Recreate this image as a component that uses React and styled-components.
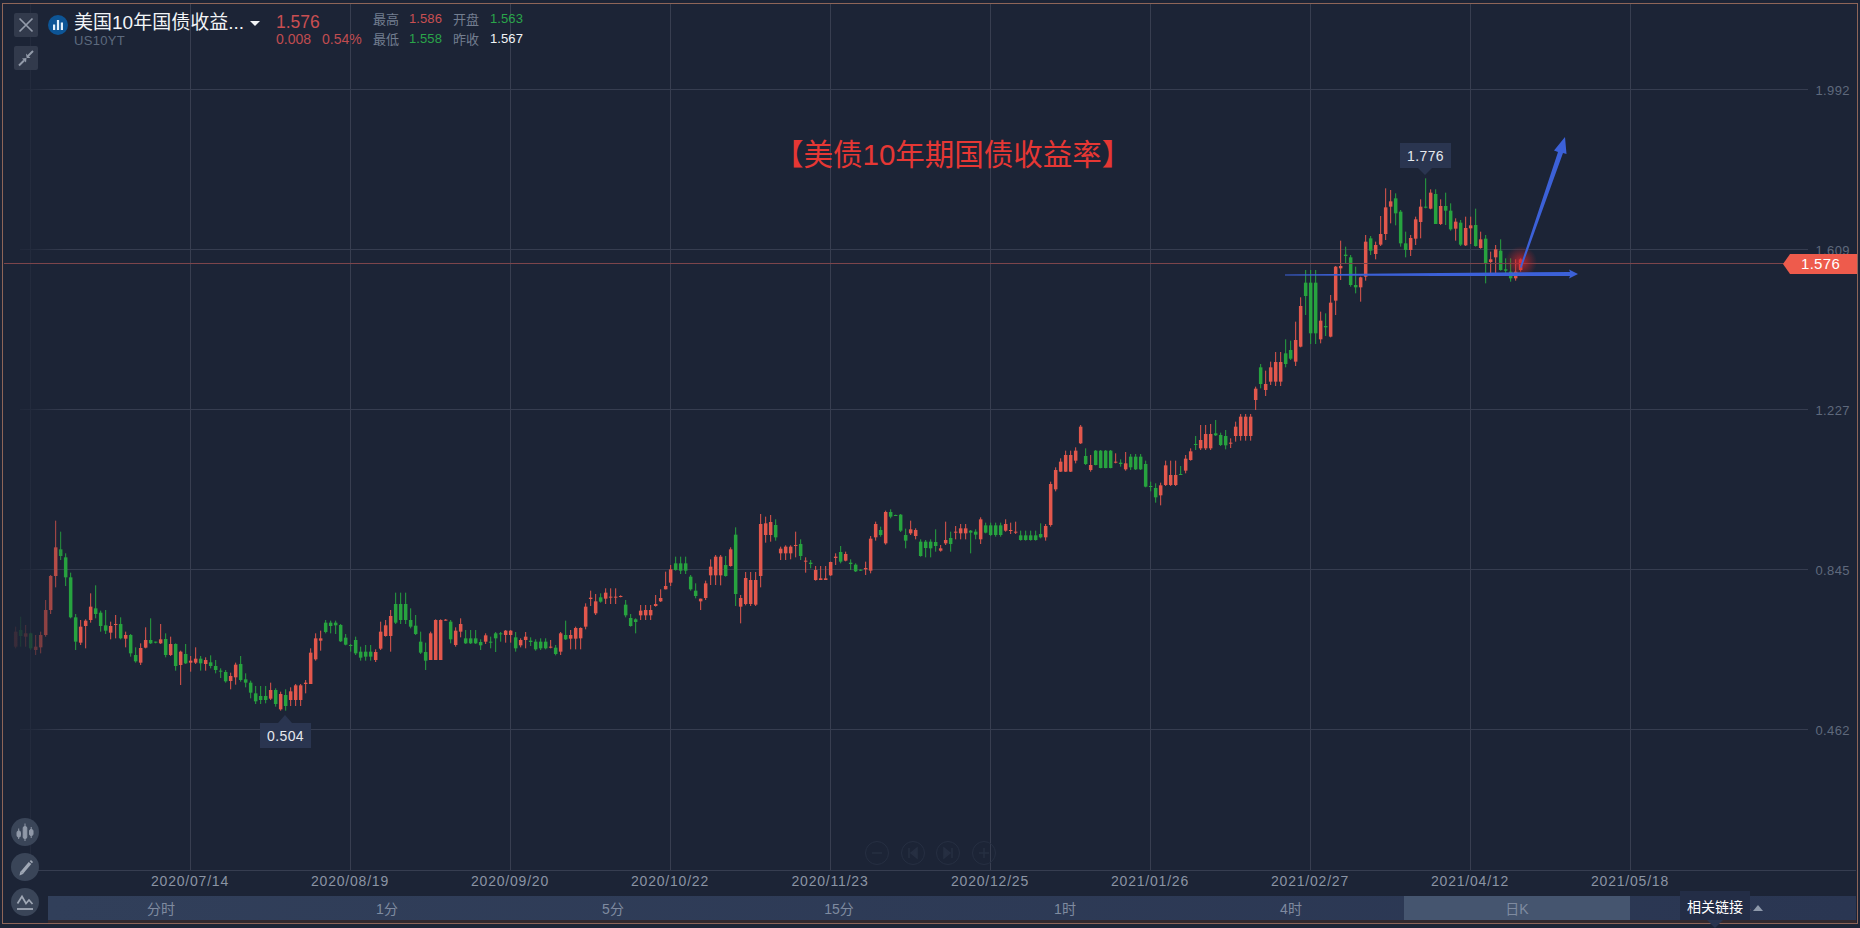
import React from 'react';
import styled, { createGlobalStyle } from 'styled-components';

const GlobalStyle = createGlobalStyle`
  html, body {
    margin: 0;
    padding: 0;
    background: #1c2436;
    font-family: "Liberation Sans", "Noto Sans CJK SC", sans-serif;
  }
`;

// Candles read off the picture: colour, wick top, body top, body bottom, wick bottom.
// Each block has its own y base, values are 3x pixels from that base.
const blocks = [
  [500, `r 380 395 440 445|g 350 390 408 440|r 375 400 410 440|g 398 400 445 450|r 405 440 450 465|r 395 405 442 460|r 300 330 405 410|r 225 228 330 342|r 62 142 228 262|g 95 148 168 180|g 160 172 232 258|g 218 232 352 355|g 342 352 425 450|r 360 380 428 435|r 358 362 378 445|r 280 320 360 368|g 256 325 342 355|g 332 338 378 395|g 330 376 392 402|r 365 378 398 418|r 345 372 375 415|g 352 372 415 418|r 395 405 416 442|g 402 405 460 470|g 442 465 484 488|r 430 444 488 495|r 382 420 443 445|g 355 420 430 432|g 425 425 428 430|r 372 418 430 432|g 400 417 465 472|r 410 432 465 468|g 430 432 498 512|r 452 455 495 555|g 432 462 490 492|r 468 482 488 515|r 442 476 488 492|g 468 476 490 512|r 472 480 492 512|g 466 487 498 505|g 480 498 510 520|g 505 512 515 534|g 510 516 544 548|r 518 528 543 568|r 488 494 532 554|g 468 492 540 545|g 520 538 548 562|g 542 548 578 595|g 558 580 604 612|g 558 588 600 612|g 558 588 600 610|r 548 570 596 600|g 565 570 612 620|r 575 582 628 632|g 568 585 618 632|r 562 574 600 618|r 552 556 600 618|r 552 556 600 618|r 540 548 552 580|r 445 458 552 552|r 400 415 478 482|r 392 415 422 452|g 360 368 396 400|g 362 368 378 400|g 362 368 376 402|g 372 375 424 426|g 402 413 434 436|g 432 435 437 455|g 410 420 460 465|g 440 455 473 482|g 435 455 470 482|g 435 455 470 482|r 448 456 480 486|r 365 395 446 450|r 360 376 408 410|r 330 348 408 455|g 278 312 368 372|g 278 312 360 372|g 278 312 360 372|g 325 360 380 385|g 345 377 402 405`],
  [500, `g 395 425 458 462|g 428 456 482 510|r 395 400 480 480|r 358 360 480 480|r 358 360 480 480|r 357 359 362 362|g 360 365 418 430|r 382 392 435 440|r 355 372 395 412|g 390 415 430 432|g 390 415 430 432|g 390 415 430 432|g 418 426 436 450|r 400 406 425 432|g 410 425 427 445|g 396 400 415 456|g 396 400 402 425|r 390 392 405 428|r 390 392 405 428|g 396 412 445 455|r 415 420 436 442|r 396 410 420 445|g 412 422 426 438|g 418 425 448 452|g 415 425 445 450|g 415 425 445 448|r 420 440 443 445|g 435 443 462 466|r 396 400 455 465|g 362 405 418 420|r 390 405 416 448|r 380 384 416 448|r 382 384 415 448|r 310 320 380 388|r 272 293 297 318|r 282 304 340 345|g 280 292 305 308|r 265 278 296 312|r 265 290 293 312|r 265 290 293 312|r 286 288 291 292|g 300 314 346 352|g 342 354 378 380|g 355 358 366 400|r 315 332 346 360|r 315 330 346 360|r 315 330 346 360|r 285 312 318 320|r 268 294 304 306|r 215 258 268 268|r 195 208 248 258|g 170 190 210 212|g 170 190 212 222|g 170 190 212 222|g 225 230 268 272|g 250 272 288 295|r 296 296 304 330|r 242 250 294 300|r 178 200 226 255|r 165 170 226 255|r 165 170 226 256|g 168 195 228 230|r 142 148 198 200|g 82 104 282 318|r 285 294 320 370|r 216 234 312 316|r 216 240 312 318|r 216 240 314 318|r 42 72 228 262|r 50 70 105 128|r 45 66 105 125|g 58 75 112 122|r 140 146 160 180|r 136 140 160 180|r 136 140 160 178|r 95 135 138 172|g 118 132 168 180|r 172 182 184 218|g 180 188 192 205|r 198 210 240 242|r 198 235 240 240|r 198 235 240 240|r 185 186 226 228|r 160 170 174 195`],
  [420, `g 378 396 425 430|r 395 402 422 424|g 418 428 432 450|g 430 434 454 456|g 448 449 452 453|r 425 444 448 465|r 348 356 452 460|r 305 312 352 362|g 320 330 345 350|r 272 276 370 374|g 268 276 290 295|g 284 285 288 288|g 282 284 332 336|g 326 345 362 385|r 302 328 340 345|r 325 330 348 358|g 358 365 408 410|g 360 365 384 412|g 358 365 385 412|g 328 366 378 395|r 375 385 392 395|r 305 360 370 375|g 335 354 372 395|r 318 335 338 358|r 312 325 340 358|r 312 325 340 358|g 330 332 338 400|g 328 335 344 358|r 292 298 358 372|g 308 316 338 340|g 308 316 345 348|g 308 316 345 350|g 308 316 345 350|r 298 312 332 335|r 308 330 333 342|r 305 335 338 342|g 332 346 360 362|g 332 346 360 362|g 332 346 360 362|g 332 346 360 362|g 310 342 352 355|r 312 318 352 362|r 185 192 315 320|r 142 150 208 214|r 115 125 155 156|r 92 105 155 156|r 92 105 155 156|r 82 92 122 130|r 15 20 70 72|g 85 108 132 135|r 105 135 150 155|g 90 92 135 136|g 90 92 144 145|g 90 92 144 145|g 90 92 144 145|r 100 125 127 130|g 118 128 132 140|r 96 130 148 152|g 102 110 142 150|g 102 110 148 150|g 102 110 148 150|g 122 132 200 202|g 185 198 201 214|g 190 204 232 248|r 188 196 226 256|r 122 136 195 198|r 122 165 195 198|r 122 165 195 198|g 138 162 164 165|r 105 116 152 160|r 85 94 120 122|g 48 72 75 90|r 15 60 85 90|r 15 42 85 90|r 12 42 85 90|g 0 40 46 48|g 38 45 75 78|g 30 48 76 88|r 55 68 70 84`],
  [250, `r 515 530 558 575|r 492 500 558 572|r 492 500 558 572|r 492 500 558 572|r 410 416 450 480|g 342 352 402 415|r 362 402 420 438|r 335 352 395 405|r 306 336 395 408|r 306 336 395 408|g 268 310 342 352|g 272 300 326 330|r 215 270 335 348|r 142 168 290 292|g 60 98 138 195|g 60 98 250 282|g 60 98 250 282|r 185 212 268 280|g 190 228 232 258|r 135 158 260 262`],
  [170, `r 288 290 392 435|r 212 288 295 330|g 230 254 258 280|g 255 262 345 350|g 290 345 352 370|r 320 322 352 395|r 195 215 320 332|g 198 205 242 255|r 215 225 252 268|r 138 192 224 228|r 55 112 192 210|r 60 94 110 160|g 70 85 130 166|g 120 125 220 230|g 185 220 240 262|r 195 204 240 258|r 140 148 206 225|r 88 110 156 205|g 25 110 112 115|r 58 68 116 118|g 58 72 162 162|r 88 108 162 165|g 68 108 122 165|g 100 122 178 182|r 145 155 176 212|g 150 158 224 228|r 140 174 226 228|r 140 166 175 222|g 116 165 228 230|r 185 208 234 236|g 195 206 280 340|r 245 268 276 310|r 225 238 262 310|g 208 242 300 302|g 265 298 302 312|g 265 305 325 335|r 268 305 325 332|r 265 268 300 305`],
];

const candles = blocks.flatMap(([base, rows]) =>
  rows.split('|').map((row) => {
    const [c, wt, bt, bb, wb] = row.split(' ');
    const y = (v) => base + Number(v) / 3;
    return { up: c === 'r', wt: y(wt), bt: y(bt), bb: y(bb), wb: y(wb) };
  })
);

const gridY = [89.5, 249.5, 409.5, 569.5, 729.5];
const gridX = [30, 190, 350, 510, 670, 830, 990, 1150, 1310, 1470, 1630];
const dates = [
  [190, '2020/07/14'], [350, '2020/08/19'], [510, '2020/09/20'], [670, '2020/10/22'], [830, '2020/11/23'],
  [990, '2020/12/25'], [1150, '2021/01/26'], [1310, '2021/02/27'], [1470, '2021/04/12'], [1630, '2021/05/18'],
];
const prices = [[89.5, '1.992'], [249.5, '1.609'], [409.5, '1.227'], [569.5, '0.845'], [729.5, '0.462']];
const tabs = ['分时', '1分', '5分', '15分', '1时', '4时', '日K'];

const Screen = styled.div`
  position: relative;
  width: 1860px;
  height: 928px;
  overflow: hidden;
  background: #1c2436;
  display: flex;
  flex-direction: column;
`;

const Frame = styled.div`
  position: absolute;
  left: 2px;
  top: 3px;
  right: 2px;
  bottom: 4px;
  border: 1px solid #8e6558;
  pointer-events: none;
`;

const ChartSvg = styled.svg`
  display: block;
  flex: none;
`;

const AxisText = styled.text`
  font-size: 14px;
  letter-spacing: 0.8px;
  fill: #8b94a4;
`;

const PriceText = styled.text`
  font-size: 13px;
  letter-spacing: 0.4px;
  fill: #5f697c;
`;

const TabRow = styled.div`
  margin-left: 48px;
  width: 1808px;
  height: 24px;
  display: grid;
  grid-template-columns: repeat(8, 226px);
  background: linear-gradient(90deg, #313f5a, #2a3652);
  box-shadow: 0 3px 0 #33292f;
`;

const Tab = styled.div`
  display: flex;
  align-items: center;
  justify-content: center;
  font-size: 14px;
  color: #7f8ba0;
  background: ${(p) => (p.$active ? '#45556f' : 'transparent')};
`;

const TabArrow = styled.span`
  width: 0;
  height: 0;
  margin-left: 2px;
  border-left: 5px solid transparent;
  border-right: 5px solid transparent;
  border-bottom: 6px solid #8e99ab;
`;

const TopBar = styled.div`
  position: absolute;
  left: 14px;
  top: 13px;
  display: flex;
  align-items: flex-start;
`;

const ToolCol = styled.div`
  display: flex;
  flex-direction: column;
  gap: 9px;
`;

const SquareBtn = styled.div`
  width: 24px;
  height: 24px;
  background: #323a4c;
  border-radius: 2px;
  display: flex;
  align-items: center;
  justify-content: center;
`;

const SymbolLogo = styled.svg`
  margin: 2px 6px 0 10px;
  flex: none;
`;

const SymbolBlock = styled.div`
  width: 202px;
`;

const TitleRow = styled.div`
  display: flex;
  align-items: center;
  height: 20px;
  gap: 6px;
`;

const Title = styled.div`
  font-size: 19px;
  line-height: 20px;
  color: #f2f4f7;
  white-space: nowrap;
`;

const Caret = styled.div`
  width: 0;
  height: 0;
  border-left: 5px solid transparent;
  border-right: 5px solid transparent;
  border-top: 5px solid #f2f4f7;
`;

const Code = styled.div`
  font-size: 13px;
  line-height: 14px;
  margin-top: 1px;
  letter-spacing: 0.3px;
  color: #5d6a7e;
`;

const QuoteBlock = styled.div`
  width: 97px;
  margin-top: -1px;
`;

const LastPrice = styled.div`
  font-size: 17.5px;
  line-height: 20px;
  color: #c94f52;
`;

const ChangeRow = styled.div`
  display: flex;
  gap: 11px;
  font-size: 14px;
  line-height: 15px;
  color: #c04c50;
`;

const Stats = styled.div`
  display: grid;
  grid-template-columns: 36px 44px 37px auto;
  grid-auto-rows: 20.5px;
  margin-top: -5px;
  align-items: center;
  font-size: 13px;
`;

const StatLabel = styled.span`
  color: #737e90;
`;

const StatValue = styled.span`
  letter-spacing: 0.1px;
  color: ${(p) => p.$color};
`;

const SideTools = styled.div`
  position: absolute;
  left: 11px;
  top: 818px;
  display: flex;
  flex-direction: column;
  gap: 7px;
`;

const RoundBtn = styled.div`
  width: 28px;
  height: 28px;
  border-radius: 50%;
  background: #3a4558;
  display: flex;
  align-items: center;
  justify-content: center;
`;

const ZoomTools = styled.div`
  position: absolute;
  left: 865px;
  top: 841px;
  display: flex;
  gap: 11.5px;
`;

const ZoomBtn = styled.div`
  width: 24px;
  height: 24px;
  box-sizing: border-box;
  border-radius: 50%;
  border: 1.5px solid #262f42;
  display: flex;
  align-items: center;
  justify-content: center;
`;

const Bubble = styled.div`
  position: absolute;
  left: ${(p) => p.$x}px;
  top: ${(p) => p.$y}px;
  width: 51px;
  height: 25px;
  background: #2a3550;
  color: #e6e9ee;
  font-size: 14px;
  letter-spacing: 0.4px;
  display: flex;
  align-items: center;
  justify-content: center;

  &::after {
    content: '';
    position: absolute;
    left: 18px;
    ${(p) => (p.$below ? 'bottom: -7px;' : 'top: -8px;')}
    border-left: 7px solid transparent;
    border-right: 7px solid transparent;
    ${(p) => (p.$below ? 'border-top: 7px solid #2a3550;' : 'border-bottom: 8px solid #2a3550;')}
  }
`;

const PriceTag = styled.div`
  position: absolute;
  left: 1783px;
  top: 254px;
  width: 74px;
  height: 20px;
  padding-left: 18px;
  box-sizing: border-box;
  background: #ee5b4c;
  color: #fff;
  font-size: 15px;
  letter-spacing: 0.3px;
  line-height: 20px;
  clip-path: polygon(0 50%, 7px 0, 100% 0, 100% 100%, 7px 100%);
`;

const LinkTip = styled.div`
  position: absolute;
  left: 1680px;
  top: 891px;
  width: 70px;
  height: 29px;
  background: #232d46;
  color: #fff;
  font-size: 14px;
  display: flex;
  align-items: center;
  justify-content: center;

  &::after {
    content: '';
    position: absolute;
    left: 27px;
    bottom: -8px;
    border-left: 8px solid transparent;
    border-right: 8px solid transparent;
    border-top: 8px solid #2a3550;
  }
`;

const RedHeading = styled.div`
  position: absolute;
  left: 774px;
  top: 136px;
  font-size: 29.5px;
  line-height: 38px;
  white-space: nowrap;
  color: #e63734;
`;

const Chart = () => (
  <ChartSvg width="1860" height="896" viewBox="0 0 1860 896">
    <defs>
      <linearGradient id="fade" x1="0" x2="1" y1="0" y2="0">
        <stop offset="0" stopColor="#1c2436" stopOpacity="0.95" />
        <stop offset="0.45" stopColor="#1c2436" stopOpacity="0.72" />
        <stop offset="1" stopColor="#1c2436" stopOpacity="0" />
      </linearGradient>
      <radialGradient id="glow">
        <stop offset="0" stopColor="#e0242c" stopOpacity="0.8" />
        <stop offset="0.5" stopColor="#c8262c" stopOpacity="0.4" />
        <stop offset="1" stopColor="#b8282f" stopOpacity="0" />
      </radialGradient>
    </defs>

    {gridX.map((x) => (
      <line key={x} x1={x + 0.5} x2={x + 0.5} y1="4" y2="870" stroke="#383e50" />
    ))}
    {gridY.map((y) => (
      <line key={y} x1="20" x2="1808" y1={y} y2={y} stroke="#363d50" />
    ))}
    <line x1="20" x2="1856" y1="870.5" y2="870.5" stroke="#363d50" />

    {candles.map((c, i) => {
      const x = 15.67 + i * 5;
      const color = c.up ? '#e2574c' : '#27a33f';
      return (
        <g key={i}>
          <line x1={x} x2={x} y1={c.wt} y2={c.wb} stroke={color} strokeWidth="1" />
          <rect x={x - 1.75} y={c.bt} width="3.5" height={Math.max(c.bb - c.bt, 1)} fill={color} />
        </g>
      );
    })}

    <rect x="4" y="4" width="62" height="866" fill="url(#fade)" />
    <line x1="4" x2="1785" y1="263.5" y2="263.5" stroke="#7c454b" />
    <circle cx="1521" cy="262" r="16" fill="url(#glow)" />

    <polygon
      points="1285,274.6 1440,273 1570,272 1569,269.5 1578,274 1569,278.5 1570,276 1440,276 1285,275.4"
      fill="#3c61d8"
    />
    <polygon
      points="1520,267 1558,152 1554,150.5 1565,137 1566.5,154 1563,153 1521.5,268"
      fill="#3c61d8"
    />

    {dates.map(([x, label]) => (
      <AxisText key={label} x={x} y="886" textAnchor="middle">
        {label}
      </AxisText>
    ))}
    {prices.map(([y, label]) => (
      <PriceText key={label} x="1850" y={y + 5} textAnchor="end">
        {label}
      </PriceText>
    ))}
  </ChartSvg>
);

const CloseIcon = () => (
  <svg width="24" height="24" viewBox="0 0 24 24">
    <path d="M5.5 5.5 18.5 18.5M18.5 5.5 5.5 18.5" stroke="#939baa" strokeWidth="1.7" fill="none" />
  </svg>
);

const CompressIcon = () => (
  <svg width="24" height="24" viewBox="0 0 24 24">
    <path d="M5 19.5 10 14.5" stroke="#939baa" strokeWidth="2" />
    <path d="M8 12.5 12 16.5 12.5 12Z" fill="#939baa" />
    <path d="M19 5 14 10" stroke="#939baa" strokeWidth="2" />
    <path d="M12 7.5 16.5 12 13 12 12.5 11.5Z" fill="#939baa" />
  </svg>
);

const CandleIcon = () => (
  <svg width="28" height="28" viewBox="0 0 28 28">
    <g fill="#9099a8" stroke="#9099a8">
      <rect x="6" y="13" width="3.5" height="6" rx="1.5" />
      <path d="M7.7 10.5V21" fill="none" />
      <rect x="12.2" y="8.5" width="3.6" height="12" rx="1.5" />
      <path d="M14 5.5V23" fill="none" />
      <rect x="18.5" y="11.5" width="3.5" height="6" rx="1.5" />
      <path d="M20.2 9V20" fill="none" />
    </g>
  </svg>
);

const PenIcon = () => (
  <svg width="28" height="28" viewBox="0 0 28 28">
    <path d="M11 19.5 19 10" stroke="#a0a8b5" strokeWidth="3.4" fill="none" />
    <path d="M8.5 22.5 9.4 18.2 12.6 20.8Z" fill="#a0a8b5" />
    <path d="M19.8 9.2 21 8" stroke="#a0a8b5" strokeWidth="3" />
  </svg>
);

const WaveIcon = () => (
  <svg width="28" height="28" viewBox="0 0 28 28">
    <path d="M6.5 15.5 11 8.5 15 15.5 18 12 21.5 16" stroke="#a0a8b5" strokeWidth="1.7" fill="none" />
    <path d="M6 21H22" stroke="#a0a8b5" strokeWidth="1.8" />
  </svg>
);

const ZoomIcon = ({ d, fill }) => (
  <svg width="14" height="14" viewBox="0 0 14 14">
    <path d={d} stroke="#262f42" strokeWidth="1.5" fill={fill || 'none'} />
  </svg>
);

const App = () => (
  <Screen>
    <GlobalStyle />
    <Chart />
    <TabRow>
      {tabs.map((t) => (
        <Tab key={t} $active={t === '日K'}>
          {t}
        </Tab>
      ))}
      <Tab>
        更多
        <TabArrow />
      </Tab>
    </TabRow>

    <Frame />

    <TopBar>
      <ToolCol>
        <SquareBtn>
          <CloseIcon />
        </SquareBtn>
        <SquareBtn>
          <CompressIcon />
        </SquareBtn>
      </ToolCol>
      <SymbolLogo width="20" height="20" viewBox="0 0 20 20">
        <circle cx="10" cy="10" r="10" fill="#0d5596" />
        <rect x="5" y="9.5" width="2.2" height="5.5" fill="#e4f1fb" />
        <rect x="8.9" y="5" width="2.2" height="10" fill="#e4f1fb" />
        <rect x="12.8" y="7.5" width="2.2" height="7.5" fill="#e4f1fb" />
      </SymbolLogo>
      <SymbolBlock>
        <TitleRow>
          <Title>美国10年国债收益...</Title>
          <Caret />
        </TitleRow>
        <Code>US10YT</Code>
      </SymbolBlock>
      <QuoteBlock>
        <LastPrice>1.576</LastPrice>
        <ChangeRow>
          <span>0.008</span>
          <span>0.54%</span>
        </ChangeRow>
      </QuoteBlock>
      <Stats>
        <StatLabel>最高</StatLabel>
        <StatValue $color="#c94f52">1.586</StatValue>
        <StatLabel>开盘</StatLabel>
        <StatValue $color="#2aa54a">1.563</StatValue>
        <StatLabel>最低</StatLabel>
        <StatValue $color="#2aa54a">1.558</StatValue>
        <StatLabel>昨收</StatLabel>
        <StatValue $color="#f2f4f7">1.567</StatValue>
      </Stats>
    </TopBar>

    <SideTools>
      <RoundBtn>
        <CandleIcon />
      </RoundBtn>
      <RoundBtn>
        <PenIcon />
      </RoundBtn>
      <RoundBtn>
        <WaveIcon />
      </RoundBtn>
    </SideTools>

    <ZoomTools>
      <ZoomBtn>
        <ZoomIcon d="M2 7H12" />
      </ZoomBtn>
      <ZoomBtn>
        <ZoomIcon d="M3 2V12M11 2 5 7 11 12Z" fill="#262f42" />
      </ZoomBtn>
      <ZoomBtn>
        <ZoomIcon d="M11 2V12M3 2 9 7 3 12Z" fill="#262f42" />
      </ZoomBtn>
      <ZoomBtn>
        <ZoomIcon d="M2 7H12M7 2V12" />
      </ZoomBtn>
    </ZoomTools>

    <RedHeading>【美债10年期国债收益率】</RedHeading>
    <Bubble $x={1400} $y={143} $below>
      1.776
    </Bubble>
    <Bubble $x={260} $y={723}>
      0.504
    </Bubble>
    <PriceTag>1.576</PriceTag>
    <LinkTip>相关链接</LinkTip>
  </Screen>
);

export default App;
